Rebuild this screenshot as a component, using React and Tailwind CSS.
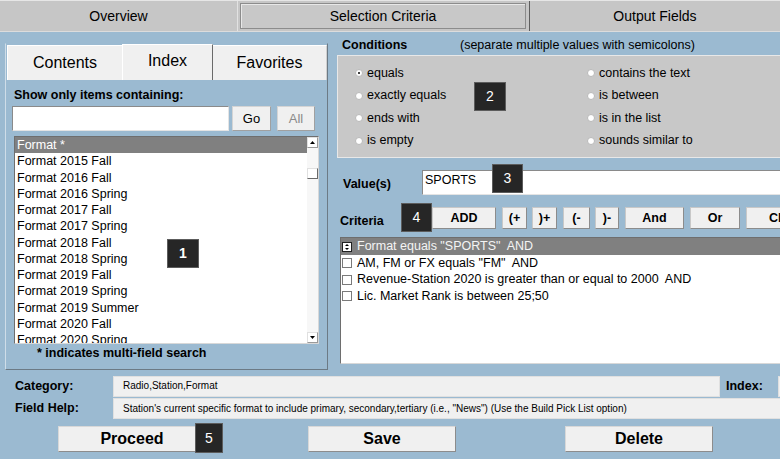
import React from "react";

const LIST = [
  "Format *",
  "Format 2015 Fall",
  "Format 2016 Fall",
  "Format 2016 Spring",
  "Format 2017 Fall",
  "Format 2017 Spring",
  "Format 2018 Fall",
  "Format 2018 Spring",
  "Format 2019 Fall",
  "Format 2019 Spring",
  "Format 2019 Summer",
  "Format 2020 Fall",
  "Format 2020 Spring",
];

const CRITERIA = [
  'Format equals "SPORTS"  AND',
  'AM, FM or FX equals "FM"  AND',
  "Revenue-Station 2020 is greater than or equal to 2000  AND",
  "Lic. Market Rank is between 25;50",
];

function Radio({ checked }) {
  return (
    <span className="relative inline-block w-[8px] h-[8px] rounded-full bg-white border border-[#b8b8b8] shrink-0">
      {checked && (
        <span className="absolute left-[2px] top-[2px] w-[2px] h-[2px] rounded-full bg-black" />
      )}
    </span>
  );
}

function RadioItem({ label, checked }) {
  return (
    <div className="h-[22.5px] flex items-center gap-[4px] text-[12.5px] whitespace-nowrap">
      <Radio checked={checked} />
      <span>{label}</span>
    </div>
  );
}

function Btn({ children, w, className = "" }) {
  return (
    <div
      className={`h-full flex items-center justify-center bg-[#f0f0f0] border border-[#c8c8c8] border-r-[#8c8c8c] border-b-[#8c8c8c] font-bold text-[12.5px] shrink-0 whitespace-nowrap ${w} ${className}`}
    >
      {children}
    </div>
  );
}

function Badge({ n, className }) {
  return (
    <div
      className={`absolute flex items-center justify-center bg-[#262626] border border-[#5c5c5c] text-white text-[14px] ${className}`}
    >
      {n}
    </div>
  );
}

function SortIcon() {
  return (
    <svg width="10" height="10" viewBox="0 0 10 10" className="shrink-0">
      <rect x="0.5" y="0.5" width="9" height="9" fill="#ffffff" stroke="#202020" />
      <path d="M5 2 L7 4 L3 4 Z" fill="#000" />
      <path d="M5 8 L7 6 L3 6 Z" fill="#000" />
    </svg>
  );
}

export default function App() {
  return (
    <div className="relative w-[780px] h-[459px] overflow-hidden bg-[#9bbad1] font-['Liberation_Sans',Arial,sans-serif] text-black">
      {/* Top tab bar */}
      <div className="h-[32px] flex bg-[#c6c6c6] border-t border-t-[#e6e6e6] border-b border-b-[#dcdcdc]">
        <div className="w-[238px] shrink-0 flex items-center justify-center text-[14px] border-r border-r-[#e2e2e2]">
          Overview
        </div>
        <div className="w-[292px] shrink-0 pl-[2px] pr-[3px] py-[2px] border-r border-r-[#5e5e5e]">
          <div className="h-full flex items-center justify-center text-[14px] bg-[#c8c8c8] border border-[#8c8c8c] shadow-[inset_1px_1px_0_#e8e8e8]">
            Selection Criteria
          </div>
        </div>
        <div className="flex-1 flex items-center justify-center text-[14px]">Output Fields</div>
      </div>

      {/* Main area */}
      <div className="h-[344px] flex">
        {/* Left panel */}
        <div className="ml-[5px] mt-[11px] w-[323px] shrink-0 h-[327px] border border-l-[#cfdde8] border-t-[#9bbad1] border-r-[#6c7a85] border-b-[#6c7a85] flex flex-col">
          <div className="flex h-[36px] ml-[1px]">
            <div className="w-[115px] shrink-0 mt-[1px] bg-[#f0f0f0] border-l border-t border-[#ffffff] flex items-center justify-center text-[16px]">
              Contents
            </div>
            <div className="w-[91px] shrink-0 bg-[#f0f0f0] border-t border-l border-t-[#ffffff] border-l-[#ffffff] border-r border-r-[#6a6a6a] flex items-center justify-center text-[16px] pb-[3px]">
              Index
            </div>
            <div className="flex-1 mt-[1px] bg-[#f0f0f0] border-t border-[#ffffff] border-r border-r-[#d0d0d0] flex items-center justify-center text-[16px]">
              Favorites
            </div>
          </div>

          <div className="ml-[8px] mt-[7px] h-[16px] leading-[16px] font-bold text-[12.5px]">
            Show only items containing:
          </div>

          <div className="mt-[3px] ml-[6px] h-[25px] flex">
            <div className="w-[217px] shrink-0 h-full bg-white border border-[#8a8a8a] border-r-[#e4e4e4] border-b-[#e4e4e4]" />
            <div className="ml-[3px] w-[39px] shrink-0 h-full flex items-center justify-center bg-[#f0f0f0] border border-[#d4d4d4] border-r-[#a0a0a0] border-b-[#a0a0a0] text-[13px]">
              Go
            </div>
            <div className="ml-[6px] w-[38px] shrink-0 h-full flex items-center justify-center bg-[#f0f0f0] border border-[#d4d4d4] border-r-[#a0a0a0] border-b-[#a0a0a0] text-[13px] text-[#8a8a8a]">
              All
            </div>
          </div>

          <div className="ml-[8px] mt-[5px] w-[305px] h-[208px] bg-white border border-[#6e6e6e] border-r-[#d8d8d8] border-b-[#d8d8d8] flex overflow-hidden">
            <div className="flex-1 overflow-hidden">
              {LIST.map((t, i) => (
                <div
                  key={t}
                  className={`h-[16.25px] leading-[16.25px] pl-[2px] text-[12.5px] whitespace-nowrap ${
                    i === 0 ? "bg-[#808080] text-white" : ""
                  }`}
                >
                  {t}
                </div>
              ))}
            </div>
            <div className="w-[11px] shrink-0 bg-[#f7f7f7] flex flex-col">
              <div className="h-[11px] bg-white border border-[#e0e0e0] border-r-[#9a9a9a] border-b-[#9a9a9a] flex items-center justify-center">
                <svg width="5" height="3" viewBox="0 0 5 3">
                  <path d="M2.5 0 L5 3 L0 3 Z" fill="#000" />
                </svg>
              </div>
              <div className="h-[20px]" />
              <div className="h-[11px] bg-white border border-[#e0e0e0] border-r-[#6a6a6a] border-b-[#6a6a6a]" />
              <div className="flex-1" />
              <div className="h-[11px] bg-white border border-[#e0e0e0] border-r-[#9a9a9a] border-b-[#9a9a9a] flex items-center justify-center">
                <svg width="5" height="3" viewBox="0 0 5 3">
                  <path d="M0 0 L5 0 L2.5 3 Z" fill="#000" />
                </svg>
              </div>
            </div>
          </div>

          <div className="ml-[31px] mt-[1px] h-[16px] leading-[16px] font-bold text-[12.5px]">
            * indicates multi-field search
          </div>
        </div>

        {/* Right column */}
        <div className="ml-[9px] w-[470px] shrink-0 flex flex-col">
          <div className="mt-[4px] h-[19px] flex items-center text-[12.5px] whitespace-nowrap">
            <span className="pl-[5px] w-[123px] shrink-0 font-bold">Conditions</span>
            <span>(separate multiple values with semicolons)</span>
          </div>

          <div className="h-[103px] bg-[#c8c8c8] border border-[#e8e8e8] border-r-[#c8c8c8] pt-[6px] pl-[17px] flex">
            <div className="w-[232px] shrink-0 flex flex-col">
              <RadioItem label="equals" checked />
              <RadioItem label="exactly equals" />
              <RadioItem label="ends with" />
              <RadioItem label="is empty" />
            </div>
            <div className="flex flex-col">
              <RadioItem label="contains the text" />
              <RadioItem label="is between" />
              <RadioItem label="is in the list" />
              <RadioItem label="sounds similar to" />
            </div>
          </div>

          <div className="mt-[12px] h-[25px] flex">
            <div className="w-[85px] shrink-0 pl-[6px] pt-[4px] flex items-center font-bold text-[12.5px]">Value(s)</div>
            <div className="flex-1 h-full bg-white border border-[#8a8a8a] border-r-[#e4e4e4] border-b-[#e4e4e4] pl-[2px] pt-[2px] text-[12.5px] leading-[14px]">
              SPORTS
            </div>
          </div>

          <div className="mt-[12px] h-[22px] flex">
            <div className="w-[95px] shrink-0 pl-[3px] flex items-end font-bold text-[12.5px] leading-[16px]">
              Criteria
            </div>
            <Btn w="w-[64px]">ADD</Btn>
            <Btn w="w-[25px]" className="ml-[6px]">(+</Btn>
            <Btn w="w-[25px]" className="ml-[5px]">)+</Btn>
            <Btn w="w-[27px]" className="ml-[6px]">(-</Btn>
            <Btn w="w-[24px]" className="ml-[5px]">)-</Btn>
            <Btn w="w-[59px]" className="ml-[6px]">And</Btn>
            <Btn w="w-[50px]" className="ml-[6px]">Or</Btn>
            <Btn w="w-[92px]" className="ml-[6px]">Change</Btn>
          </div>

          <div className="mt-[8px] ml-[3px] h-[127px] bg-white border border-[#6e6e6e] border-r-0 border-b-[#d8d8d8]">
            {CRITERIA.map((t, i) => (
              <div
                key={t}
                className={`flex items-center gap-[5px] pl-[1px] whitespace-pre text-[12.5px] ${
                  i === 0 ? "h-[17px] bg-[#808080] text-[#f4f4f4]" : "h-[16.5px]"
                }`}
              >
                {i === 0 ? (
                  <SortIcon />
                ) : (
                  <span className="w-[10px] h-[10px] bg-white border border-[#7a7a7a] shrink-0" />
                )}
                <span>{t}</span>
              </div>
            ))}
          </div>
        </div>
      </div>

      {/* Bottom info */}
      <div className="h-[21px] flex items-center">
        <div className="w-[113px] shrink-0 pl-[15px] font-bold text-[12.5px]">Category:</div>
        <div className="w-[607px] shrink-0 h-full bg-[#f0f0f0] border border-[#e0e0e0] pl-[9px] flex items-center pb-[2px] text-[10px]">
          Radio,Station,Format
        </div>
        <div className="ml-[6px] w-[52px] shrink-0 font-bold text-[12.5px]">Index:</div>
        <div className="w-[100px] shrink-0 h-full bg-[#f0f0f0] border border-[#e0e0e0]" />
      </div>
      <div className="mt-[1px] h-[21px] flex items-center">
        <div className="w-[113px] shrink-0 pl-[15px] font-bold text-[12.5px]">Field Help:</div>
        <div className="w-[700px] shrink-0 h-full bg-[#f0f0f0] border border-[#e0e0e0] pl-[9px] flex items-center pb-[1px] text-[10px] whitespace-nowrap">
          Station's current specific format to include primary, secondary,tertiary (i.e., "News") (Use the Build Pick List option)
        </div>
      </div>

      <div className="mt-[7px] h-[26px] flex">
        <div className="ml-[58px] w-[148px] shrink-0 h-full flex items-center justify-center bg-[#f0f0f0] border border-[#d8d8d8] border-r-[#8c8c8c] border-b-[#8c8c8c] font-bold text-[16px]">
          Proceed
        </div>
        <div className="ml-[102px] w-[148px] shrink-0 h-full flex items-center justify-center bg-[#f0f0f0] border border-[#d8d8d8] border-r-[#8c8c8c] border-b-[#8c8c8c] font-bold text-[16px]">
          Save
        </div>
        <div className="ml-[109px] w-[148px] shrink-0 h-full flex items-center justify-center bg-[#f0f0f0] border border-[#d8d8d8] border-r-[#8c8c8c] border-b-[#8c8c8c] font-bold text-[16px]">
          Delete
        </div>
      </div>

      {/* Numbered annotation badges */}
      <Badge n="1" className="left-[167px] top-[239px] w-[32px] h-[29px] font-bold" />
      <Badge n="2" className="left-[474px] top-[82px] w-[32px] h-[29px]" />
      <Badge n="3" className="left-[492px] top-[164px] w-[31px] h-[29px]" />
      <Badge n="4" className="left-[401px] top-[203px] w-[31px] h-[29px]" />
      <Badge n="5" className="left-[195px] top-[423px] w-[28px] h-[30px]" />
    </div>
  );
}
